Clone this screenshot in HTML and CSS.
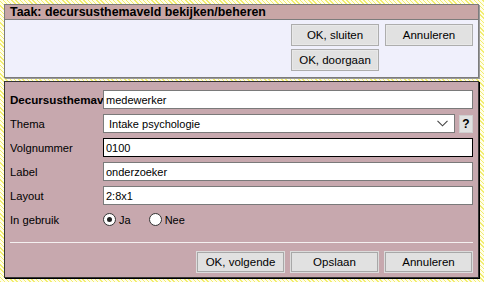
FILE: index.html
```html
<!DOCTYPE html>
<html>
<head>
    <title>Taak: decursusthemaveld bekijken/beheren</title>
    <link rel="stylesheet" href="styles.css">
</head>
<body>
    <div class="taak">
        <div class="taak-kop">Taak: decursusthemaveld bekijken/beheren</div>
        <div class="taak-knoppen">
            <button class="knop">OK, sluiten</button>
            <button class="knop">Annuleren</button>
            <button class="knop">OK, doorgaan</button>
        </div>
    </div>

    <form class="formulier">
        <div class="rij">
            <label class="veld-label vet">Decursusthemaveld</label>
            <input class="veld" type="text" value="medewerker">
        </div>
        <div class="rij">
            <label class="veld-label">Thema</label>
            <div class="keuze">
                <span>Intake psychologie</span>
                <svg class="pijl" width="11" height="7" viewBox="0 0 11 7"><path d="M0.5 0.8 L5.5 5.8 L10.5 0.8" fill="none" stroke="#444" stroke-width="1.1"/></svg>
            </div>
            <button class="help" type="button">?</button>
        </div>
        <div class="rij">
            <label class="veld-label">Volgnummer</label>
            <input class="veld actief" type="text" value="0100">
        </div>
        <div class="rij">
            <label class="veld-label">Label</label>
            <input class="veld" type="text" value="onderzoeker">
        </div>
        <div class="rij">
            <label class="veld-label">Layout</label>
            <input class="veld" type="text" value="2:8x1">
        </div>
        <div class="rij">
            <label class="veld-label">In gebruik</label>
            <span class="radio aan"></span><span class="radio-tekst">Ja</span>
            <span class="radio"></span><span class="radio-tekst">Nee</span>
        </div>
        <div class="scheiding"></div>
        <div class="onder-knoppen">
            <button class="knop" type="button">OK, volgende</button>
            <button class="knop" type="button">Opslaan</button>
            <button class="knop" type="button">Annuleren</button>
        </div>
    </form>
</body>
</html>
```

FILE: styles.css
```css
body {
    margin: 0;
    padding: 4px;
    font-family: "Liberation Sans", Arial, sans-serif;
    font-size: 11px;
    color: #000;
    background: repeating-linear-gradient(45deg, #f2ee70 0 1px, #fffde8 1px 3px);
    height: 282px;
    box-sizing: border-box;
}
.taak {
    width: 475px;
    box-sizing: border-box;
    border: 1px solid #7c7c7c;
    box-shadow: 1px 1px 0 #9a9a9a;
    background-color: #f0f0fc;
}
.taak-kop {
    height: 14px;
    line-height: 14px;
    padding-left: 5px;
    background-color: #c8a6a6;
    border-bottom: 1px solid #7c7c7c;
    font-weight: bold;
    font-size: 12.4px;
}
.taak-knoppen {
    display: grid;
    grid-template-columns: 88px 88px;
    column-gap: 6px;
    row-gap: 3px;
    justify-content: end;
    padding: 4px 5px 6px 0;
}
.knop {
    height: 22px;
    padding: 0;
    font-family: "Liberation Sans", Arial, sans-serif;
    font-size: 11.5px;
    color: #000;
    background-color: #e1e1e1;
    border: 1px solid #adadad;
    box-shadow: inset 0 0 0 1px #e8e8e8;
}
.formulier {
    width: 475px;
    margin: 3px 0 0;
    box-sizing: border-box;
    border: 1px solid #333;
    box-shadow: 1px 1px 0 #000;
    background-color: #c7a8ae;
    padding: 8px 5px 4px 5px;
}
.rij {
    display: flex;
    align-items: center;
    height: 19px;
    margin-bottom: 5px;
}
.veld-label {
    width: 93px;
    flex: none;
    overflow: hidden;
    white-space: nowrap;
    font-size: 11.2px;
}
.vet {
    font-weight: bold;
    font-size: 11.6px;
}
.veld {
    width: 370px;
    height: 19px;
    box-sizing: border-box;
    margin: 0;
    padding: 0 2px;
    border: 1px solid #7a7a7a;
    font-family: "Liberation Sans", Arial, sans-serif;
    font-size: 11px;
    background-color: #fff;
}
.veld.actief {
    border: 1px solid #000;
}
.keuze {
    width: 353px;
    height: 19px;
    box-sizing: border-box;
    border: 1px solid #7a7a7a;
    background-color: #fff;
    display: flex;
    align-items: center;
    justify-content: space-between;
    padding: 0 6px 0 5px;
}
.help {
    width: 14px;
    height: 18px;
    margin-left: 4px;
    padding: 0;
    border: 1px solid #cfcfcf;
    background-color: #e1e1e1;
    font-family: "Liberation Sans", Arial, sans-serif;
    font-weight: bold;
    font-size: 12px;
}
.radio {
    width: 11px;
    height: 11px;
    border: 1px solid #333;
    border-radius: 50%;
    background-color: #fff;
    display: flex;
    align-items: center;
    justify-content: center;
}
.radio.aan::after {
    content: "";
    width: 5px;
    height: 5px;
    border-radius: 50%;
    background-color: #222;
}
.radio-tekst {
    margin: 0 18px 0 3px;
}
.scheiding {
    height: 0;
    border-top: 1px solid #f4f0f0;
    margin: 13px 0 8px;
}
.onder-knoppen {
    display: flex;
    justify-content: flex-end;
    gap: 5px;
}
.onder-knoppen .knop {
    width: 89px;
    border-color: #dcdcdc;
    box-shadow: inset 0 0 0 1px #a8a8a8;
}
```
